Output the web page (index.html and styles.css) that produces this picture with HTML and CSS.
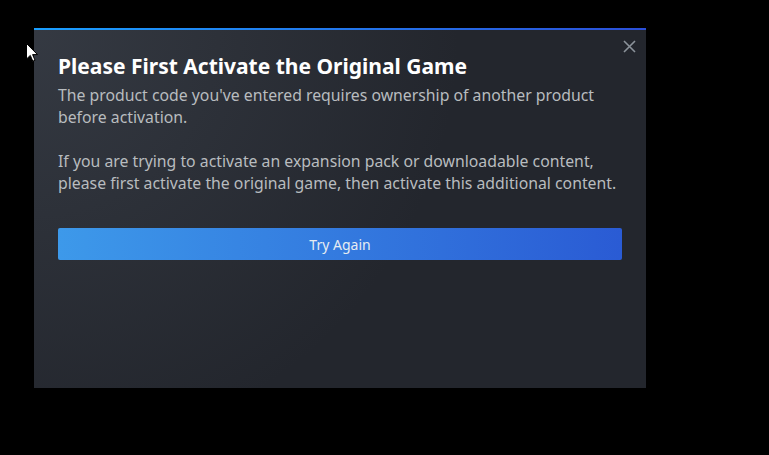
FILE: index.html
```html
<!DOCTYPE html>
<html lang="en">
<head>
<meta charset="utf-8">
<title>Please First Activate the Original Game</title>
<link rel="stylesheet" href="styles.css">
</head>
<body>
<div class="stage">
  <div class="dialog">
    <button class="close" aria-label="Close">
      <svg width="13" height="13" viewBox="0 0 13 13"><path d="M1 1L12 12M12 1L1 12" stroke="#8b929a" stroke-width="1.6" fill="none"/></svg>
    </button>
    <h1 class="title">Please First Activate the Original Game</h1>
    <div class="body">
      <p>The product code you've entered requires ownership of another product before activation.</p>
      <p>If you are trying to activate an expansion pack or downloadable content, please first activate the original game, then activate this additional content.</p>
    </div>
    <button class="primary">Try Again</button>
  </div>
  <svg class="cursor" width="12" height="19" viewBox="0 0 12 19"><path d="M0.5 0.5V16L4.3 12.4L6.8 18.2L9 17.2L6.6 11.6H11.5Z" fill="#fff" stroke="#000" stroke-width="1"/></svg>
</div>
</body>
</html>
```
FILE: styles.css
```css
html, body {
  margin: 0;
  padding: 0;
  background: #000;
}
.stage {
  position: relative;
  width: 769px;
  height: 455px;
  padding: 28px 0 0 34px;
  box-sizing: border-box;
}
.dialog {
  position: relative;
  width: 612px;
  height: 360px;
  box-sizing: border-box;
  padding: 23px 24px 0 24px;
  border-top: 2px solid transparent;
  background:
    linear-gradient(to right, #1a9fff, #2b4fd8) top / 100% 2px no-repeat border-box,
    radial-gradient(circle at top left, rgba(74, 81, 92, 0.45) 0%, rgba(75, 81, 92, 0) 60%) padding-box,
    #23262d;
  font-family: "Noto Sans", "Open Sans", sans-serif;
}
.close {
  position: absolute;
  top: 8px;
  right: 9px;
  width: 16px;
  height: 16px;
  padding: 0;
  border: 0;
  background: none;
  display: flex;
  align-items: center;
  justify-content: center;
}
.title {
  margin: 0;
  font-size: 21px;
  font-weight: 700;
  line-height: 26px;
  color: #ffffff;
}
.body {
  margin-top: 5px;
  color: #b8bcbf;
  font-size: 15.8px;
  line-height: 22px;
}
.body p {
  margin: 0 0 22px 0;
}
.body p:last-child {
  margin-bottom: 0;
}
.primary {
  display: block;
  width: 100%;
  height: 32px;
  margin-top: 34px;
  border: 0;
  border-radius: 2px;
  color: #e6ecf2;
  font-family: "Noto Sans", "Open Sans", sans-serif;
  font-size: 14px;
  background: linear-gradient(to right, #3d99ea 0%, #2a5bd4 100%);
}
.cursor {
  position: absolute;
  left: 26px;
  top: 43px;
}
```
